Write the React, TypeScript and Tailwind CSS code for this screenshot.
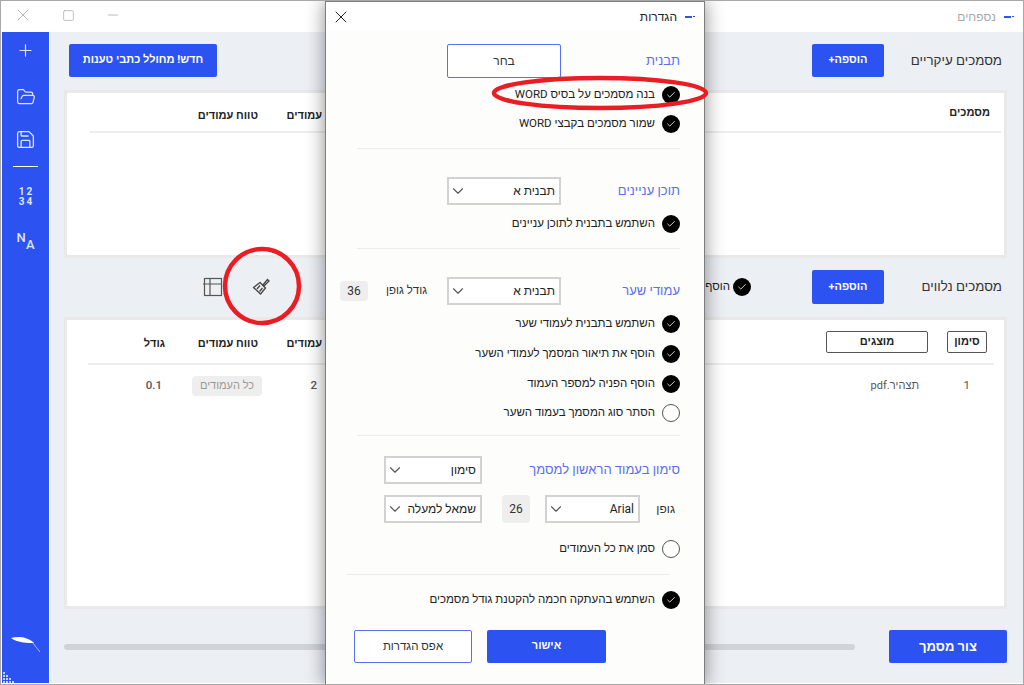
import { Plus, FolderOpen, Save, ChevronDown, X, Minus, Square, Check } from 'lucide-react'

const font = { fontFamily: 'Roboto, "Liberation Sans", sans-serif' }

function Tick({ on = true }: { on?: boolean }) {
  if (!on) return <span className="w-[18px] h-[18px] shrink-0 rounded-full border-[1.5px] border-[#555] bg-white" />
  return (
    <span className="w-[18px] h-[18px] shrink-0 rounded-full bg-black flex items-center justify-center">
      <Check size={10} strokeWidth={2} className="text-white" />
    </span>
  )
}

function CheckRow({ label, on = true, className = '' }: { label: string; on?: boolean; className?: string }) {
  return (
    <div className={`flex items-center gap-[7px] h-[18px] text-[11.5px] text-[#222] ${className}`}>
      <Tick on={on} />
      <span>{label}</span>
    </div>
  )
}

function Select({ value, className = '' }: { value: string; className?: string }) {
  return (
    <div className={`h-[28px] shrink-0 border-2 border-[#d2d2d2] bg-white flex items-center justify-between pr-[4px] text-[12px] text-[#222] ${className}`}>
      <span>{value}</span>
      <ChevronDown size={18} strokeWidth={1.5} className="text-[#555]" />
    </div>
  )
}

function Badge({ value, className = '' }: { value: string; className?: string }) {
  return <div className={`rounded shrink-0 bg-[#eeeeee] flex items-center justify-center text-[12px] text-[#333] ${className}`}>{value}</div>
}

function Divider({ className = '' }: { className?: string }) {
  return <div className={`h-px bg-[#ececec] ${className}`} />
}

function SectionTitle({ children, className = '' }: { children: string; className?: string }) {
  return <div className={`text-[13px] text-[#5a6ff0] whitespace-nowrap shrink-0 ${className}`}>{children}</div>
}

function BlueButton({ children, className = '' }: { children: string; className?: string }) {
  return (
    <button className={`rounded-[2px] shrink-0 bg-[#2d52f2] text-white font-bold text-[11px] flex items-center justify-center ${className}`}>
      {children}
    </button>
  )
}

function TitleMark() {
  return (
    <span className="flex items-center gap-[1px]">
      <span className="w-[2px] h-px bg-[#2d52f2]" />
      <span className="w-[7px] h-[2px] bg-[#2d52f2]" />
    </span>
  )
}

function Feather() {
  return (
    <svg width="32" height="18" viewBox="0 0 32 18" className="text-white">
      <path d="M1 2 C8 0 18 1 24 7 C18 7 8 7 1 2 Z" fill="currentColor" />
      <path d="M22 6 L30 16" stroke="currentColor" strokeOpacity="0.6" strokeWidth="1" fill="none" />
    </svg>
  )
}

function Sidebar() {
  return (
    <aside className="w-[47px] shrink-0 bg-[#2d52f2] text-[#dfe5ff] flex flex-col items-center relative">
      <Plus size={19} strokeWidth={1.5} className="mt-[9px]" />
      <FolderOpen size={20} strokeWidth={1.5} className="mt-[27px]" />
      <Save size={21} strokeWidth={1.5} className="mt-[22px]" />
      <div className="w-[25px] h-px bg-white mt-[16px]" />
      <div className="mt-[20px] text-[10px] leading-[10px] font-bold tracking-[2px] text-center pl-[2px]">
        12
        <br />
        34
      </div>
      <div className="mt-[24px] w-[18px] h-[20px] relative text-[13px] leading-none font-medium">
        <span className="absolute left-0 top-0">N</span>
        <span className="absolute right-0 bottom-0">A</span>
      </div>
      <div className="mt-auto mb-[29px]">
        <Feather />
      </div>
      <svg width="12" height="12" viewBox="0 0 12 12" className="absolute left-0 bottom-0 text-[#c9d3ff]" fill="currentColor">
        <rect x="1" y="1" width="2" height="2" />
        <rect x="1" y="4" width="2" height="2" />
        <rect x="4" y="4" width="2" height="2" />
        <rect x="1" y="7" width="2" height="2" />
        <rect x="4" y="7" width="2" height="2" />
        <rect x="7" y="7" width="2" height="2" />
        <rect x="1" y="10" width="2" height="2" />
        <rect x="4" y="10" width="2" height="2" />
        <rect x="7" y="10" width="2" height="2" />
        <rect x="10" y="10" width="2" height="2" />
      </svg>
    </aside>
  )
}

function TableHead({ children }: { children: string }) {
  return <span className="text-[11px] font-bold text-[#222] whitespace-nowrap">{children}</span>
}

function TableIcon() {
  return (
    <svg width="20" height="20" viewBox="0 0 20 20" fill="none" stroke="#555" strokeWidth="1.2">
      <rect x="1.5" y="1.5" width="17" height="17" />
      <path d="M0 7H19M7 1.5V18.5" />
    </svg>
  )
}

function BrushIcon() {
  return (
    <svg width="18" height="18" viewBox="0 0 18 18" fill="none" stroke="#444" strokeWidth="1.3">
      <path d="M10.5 7.5 L15.5 1.5 L17 3 L11.5 8.5" />
      <path d="M8 4.5 L13.5 10 L8.5 16 L1.5 9.5 Z" strokeLinejoin="round" />
      <path d="M5 11 L8 7.5 M7.5 13.5 L10.5 10" />
    </svg>
  )
}

function MainArea() {
  return (
    <main className="flex-1 bg-[#eceff4] pl-[14px] pr-[16px] pt-[12px] flex flex-col" dir="rtl">
      <div className="flex items-center h-[33px] pr-[5px]">
        <span className="text-[13.3px] text-[#333] w-[90px] shrink-0 whitespace-nowrap">מסמכים עיקריים</span>
        <BlueButton className="w-[72px] h-[33px] mr-[28px]">הוספה+</BlueButton>
        <BlueButton className="w-[148px] h-[33px] mr-auto ml-[5px]">חדש! מחולל כתבי טענות</BlueButton>
      </div>

      <section className="h-[168px] mt-[13px] border-[3px] border-[#e9e9e9] bg-white">
        <div className="flex h-[40px] items-center mr-[3px] ml-[23px] border-b-2 border-[#eeeeee] pr-[11px] pt-[3px]">
          <TableHead>מסמכים</TableHead>
          <div className="mr-auto flex">
            <span className="w-[64px]">
              <TableHead>עמודים</TableHead>
            </span>
            <span className="w-[168px]">
              <TableHead>טווח עמודים</TableHead>
            </span>
          </div>
        </div>
      </section>

      <div className="flex items-center h-[34px] mt-[12px] pr-[5px]">
        <span className="text-[13.3px] text-[#333] w-[90px] shrink-0 whitespace-nowrap">מסמכים נלווים</span>
        <BlueButton className="w-[72px] h-[34px] mr-[28px]">הוספה+</BlueButton>
        <div className="flex items-center gap-[3px] mr-[61px] text-[11.5px] text-[#222] whitespace-nowrap">
          <Tick />
          <span>הוסף</span>
        </div>
        <div className="mr-auto ml-[139px] flex items-center gap-[29px]">
          <BrushIcon />
          <TableIcon />
        </div>
      </div>

      <section className="h-[292px] mt-[13px] border-[3px] border-[#e9e9e9] bg-white">
        <div className="flex h-[45px] items-center ml-[21px] mr-[10px] border-b-2 border-[#eeeeee] pr-[7px] pt-[1px]">
          <span className="w-[40px] h-[22px] rounded-[2px] border border-[#555] flex items-center justify-center text-[11px] font-bold text-[#222]">סימון</span>
          <span className="w-[102px] h-[22px] mr-[19px] rounded-[2px] border border-[#555] flex items-center justify-center text-[11px] font-bold text-[#222]">מוצגים</span>
          <div className="mr-auto flex">
            <span className="w-[64px]">
              <TableHead>עמודים</TableHead>
            </span>
            <span className="w-[93px]">
              <TableHead>טווח עמודים</TableHead>
            </span>
            <span className="w-[77px]">
              <TableHead>גודל</TableHead>
            </span>
          </div>
        </div>
        <div className="flex h-[42px] items-center text-[11.5px] text-[#555] ml-[21px] mr-[10px]">
          <span className="w-[43px] pr-[24px]">1</span>
          <span className="mr-[32px] text-[11px]">תצהיר.pdf</span>
          <div className="mr-auto flex items-center">
            <span className="w-[60px] pr-[5px] font-medium">2</span>
            <span className="w-[70px] h-[20px] rounded bg-[#eeeeee] text-[#999] text-[11px] flex items-center justify-center">כל העמודים</span>
            <span className="w-[104px] pr-[30px] font-medium">0.1</span>
          </div>
        </div>
      </section>

      <div className="flex items-center h-[33px] mt-[21px]">
        <BlueButton className="w-[118px] h-[33px] text-[13px]">צור מסמך</BlueButton>
        <div className="flex-1 h-[6px] rounded-full bg-[#d0d4d9] mr-[34px]" />
      </div>
    </main>
  )
}

function SettingsDialog() {
  return (
    <div dir="rtl" className="absolute left-[324px] top-0 w-[380px] h-[685px] flex flex-col bg-[#fdfdfb] border-x border-t border-[#7d7d7d] shadow-[0_0_18px_rgba(0,0,0,0.45)]">
      <header className="h-[29px] shrink-0 bg-white flex items-center justify-between pr-[9px] pl-[5px]">
        <div className="flex items-center gap-[8px] text-[12px] text-[#222]">
          <TitleMark />
          <span>הגדרות</span>
        </div>
        <X size={20} strokeWidth={1.2} className="text-[#222]" />
      </header>

      <div className="flex-1 flex flex-col pr-[24px] pl-[31px] pt-[13px]">
        <div className="flex items-center h-[34px]">
          <SectionTitle className="w-[119px]">תבנית</SectionTitle>
          <div className="w-[114px] h-[34px] rounded-[2px] border border-[#5a6ff0] bg-white flex items-center justify-center text-[12px] text-[#333]">בחר</div>
        </div>
        <CheckRow label="בנה מסמכים על בסיס WORD" className="mt-[8px]" />
        <CheckRow label="שמור מסמכים בקבצי WORD" className="mt-[11px]" />
        <Divider className="mt-[15px]" />

        <div className="flex items-center h-[28px] mt-[28px]">
          <SectionTitle className="w-[119px]">תוכן עניינים</SectionTitle>
          <Select value="תבנית א" className="w-[114px]" />
        </div>
        <CheckRow label="השתמש בתבנית לתוכן עניינים" className="mt-[10px]" />
        <Divider className="mt-[15px]" />

        <div className="flex items-center h-[28px] mt-[28px] ml-[-20px]">
          <SectionTitle className="w-[119px]">עמודי שער</SectionTitle>
          <Select value="תבנית א" className="w-[114px]" />
          <span className="mr-[20px] w-[41px] shrink-0 text-[11.5px] font-medium text-[#333] whitespace-nowrap">גודל גופן</span>
          <Badge value="36" className="w-[28px] h-[20px] mr-[18px]" />
        </div>
        <CheckRow label="השתמש בתבנית לעמודי שער" className="mt-[10px]" />
        <CheckRow label="הוסף את תיאור המסמך לעמודי השער" className="mt-[12px]" />
        <CheckRow label="הוסף הפניה למספר העמוד" className="mt-[12px]" />
        <CheckRow label="הסתר סוג המסמך בעמוד השער" on={false} className="mt-[11px]" />
        <Divider className="mt-[13px]" />

        <div className="flex items-center justify-between h-[28px] mt-[20px] ml-[27px]">
          <SectionTitle>סימון בעמוד הראשון למסמך</SectionTitle>
          <Select value="סימון" className="w-[98px]" />
        </div>
        <div className="flex items-center h-[28px] mt-[11px] ml-[-27px] pr-[5px]">
          <span className="w-[35px] shrink-0 text-[12px] text-[#333]">גופן</span>
          <Select value="Arial" className="w-[95px]" />
          <Badge value="26" className="w-[28px] h-[28px] mr-[15px]" />
          <Select value="שמאל למעלה" className="w-[98px] mr-[20px]" />
        </div>
        <CheckRow label="סמן את כל העמודים" on={false} className="mt-[17px]" />
        <Divider className="mt-[16px] mr-[10px] ml-[-10px]" />
        <CheckRow label="השתמש בהעתקה חכמה להקטנת גודל מסמכים" className="mt-[16px]" />

        <div className="flex items-center h-[33px] mt-[21px] pr-[74px] ml-[-3px]">
          <BlueButton className="w-[119px] h-[33px]">אישור</BlueButton>
          <button className="w-[118px] h-[33px] mr-[15px] rounded-[2px] border border-[#5a6ff0] bg-white text-[11.5px] text-[#333]">אפס הגדרות</button>
        </div>
      </div>
    </div>
  )
}

export default function App() {
  return (
    <div className="relative w-[1024px] h-[685px] overflow-hidden bg-white flex flex-col border border-[#a8a8a8]" style={font}>
      <header className="h-[31px] shrink-0 bg-white flex items-center justify-between text-[#a8a8a8] pl-[12px] pr-[9px]">
        <div className="flex items-center mb-[3px]">
          <X size={20} strokeWidth={1} />
          <Square size={13} strokeWidth={1.3} className="ml-[29px]" />
          <Minus size={16} strokeWidth={1.2} className="ml-[30px]" />
        </div>
        <div className="flex items-center gap-[8px] text-[12px]" dir="rtl">
          <TitleMark />
          <span>נספחים</span>
        </div>
      </header>

      <div className="flex-1 flex pl-px pb-px min-h-0">
        <Sidebar />
        <div className="w-px bg-white" />
        <MainArea />
      </div>

      <SettingsDialog />

      <svg className="absolute left-0 top-0 pointer-events-none" width="1024" height="685" fill="none" stroke="#ea1c24" strokeWidth="4.5">
        <ellipse cx="599" cy="92" rx="106" ry="15" />
        <circle cx="261" cy="285" r="37" />
      </svg>
    </div>
  )
}
